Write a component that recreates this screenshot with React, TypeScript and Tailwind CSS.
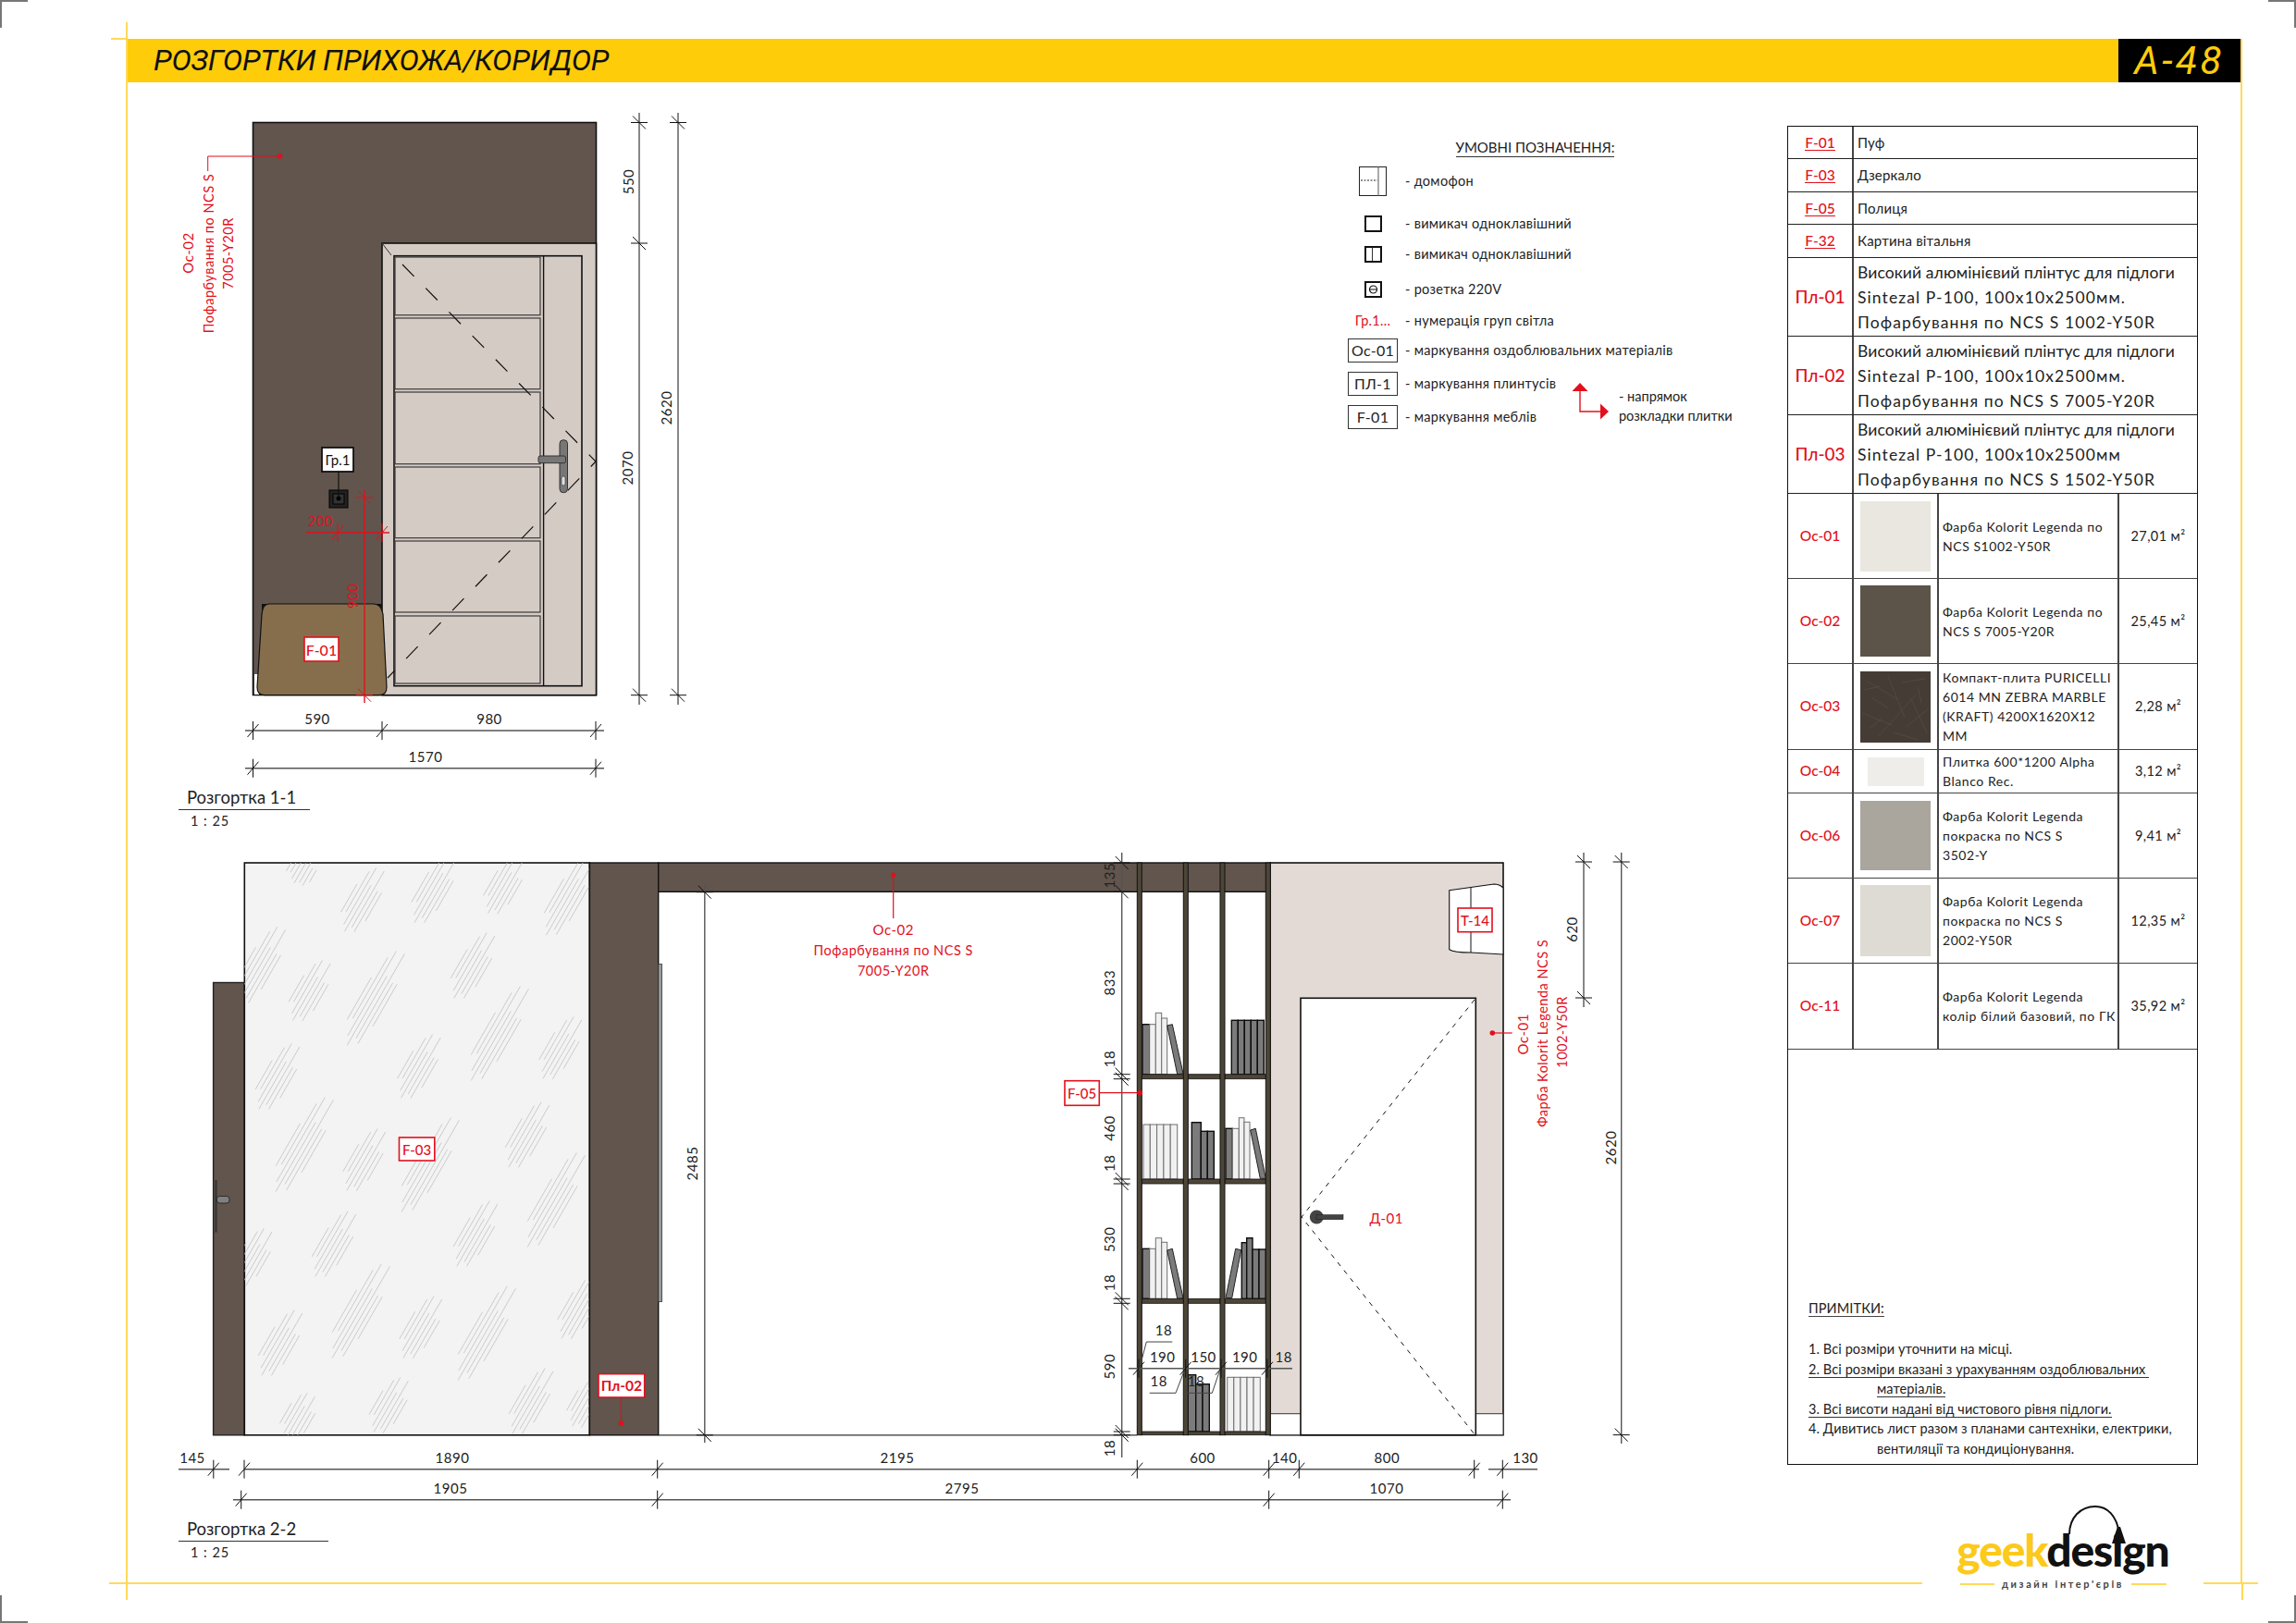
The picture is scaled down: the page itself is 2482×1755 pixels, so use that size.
import React from "react";

const RED = "#e2101c";
const WALL = "#61554d";
const DOOR = "#d5cbc5";
const PALE = "#e3dad5";

// dimension line running left to right with slashed ticks
function HDim({ y, x1, x2, ticks }: { y: number; x1: number; x2: number; ticks: number[] }) {
  return (
    <g>
      <line x1={x1} y1={y} x2={x2} y2={y} stroke="#555" strokeWidth={1.4} />
      {ticks.map((t) => (
        <g key={t} stroke="#111" strokeWidth={1}>
          <line x1={t} y1={y - 10} x2={t} y2={y + 10} />
          <line x1={t - 6} y1={y + 7} x2={t + 6} y2={y - 7} />
        </g>
      ))}
    </g>
  );
}

function VDim({ x, y1, y2, ticks, color = "#111" }: { x: number; y1: number; y2: number; ticks: number[]; color?: string }) {
  return (
    <g>
      <line x1={x} y1={y1} x2={x} y2={y2} stroke="#555" strokeWidth={1.4} />
      {ticks.map((t) => (
        <g key={t} stroke={color} strokeWidth={1}>
          <line x1={x - 9} y1={t} x2={x + 9} y2={t} />
          <line x1={x - 7} y1={t - 7} x2={x + 7} y2={t + 7} />
        </g>
      ))}
    </g>
  );
}

function Label({ x, y, children, size = 15, fill = "#222" }: { x: number; y: number; children: React.ReactNode; size?: number; fill?: string }) {
  return (
    <text x={x} y={y} fontSize={size} fill={fill} textAnchor="middle" dominantBaseline="central" letterSpacing={0.5}>
      {children}
    </text>
  );
}

function RotLabel({ x, y, children, size = 15, fill = "#222" }: { x: number; y: number; children: React.ReactNode; size?: number; fill?: string }) {
  return (
    <text x={x} y={y} fontSize={size} fill={fill} textAnchor="middle" dominantBaseline="central" letterSpacing={0.5} transform={`rotate(-90 ${x} ${y})`}>
      {children}
    </text>
  );
}

function Tag({ x, y, w, h, text, color = RED, weight = 700, size = 15 }: { x: number; y: number; w: number; h: number; text: string; color?: string; weight?: number; size?: number }) {
  return (
    <g>
      <rect x={x} y={y} width={w} height={h} fill="#fff" stroke={color} strokeWidth={1.6} />
      <text x={x + w / 2} y={y + h / 2} fontSize={size} fontWeight={weight} fill={color} textAnchor="middle" dominantBaseline="central">
        {text}
      </text>
    </g>
  );
}

function Elevation11() {
  const panels = [
    [278, 340.7],
    [344, 420.7],
    [424, 501.7],
    [505, 581.7],
    [585, 662],
    [666, 739],
  ];
  return (
    <svg className="block shrink-0" width={570} height={790} viewBox="190 110 570 790">
      <rect x={273.5} y={132.5} width={371} height={619} fill={WALL} stroke="#111" strokeWidth={1.6} />
      <rect x={275} y={729} width={5} height={22} fill="#fff" />

      {/* door */}
      <rect x={413} y={263} width={231.5} height={488.7} fill={DOOR} stroke="#111" strokeWidth={1.6} />
      <line x1={413} y1={263} x2={423} y2={276} stroke="#333" strokeWidth={1} />
      <rect x={426} y={276.7} width={203} height={465} fill={DOOR} stroke="#111" strokeWidth={1.6} />
      {panels.map(([a, b]) => (
        <rect key={a} x={427} y={a} width={157} height={b - a} fill={DOOR} stroke="#3a3a3a" strokeWidth={1.2} />
      ))}
      <line x1={587.6} y1={277} x2={587.6} y2={741} stroke="#111" strokeWidth={1.4} />
      <polyline points="435,286 644,499 419,733" fill="none" stroke="#111" strokeWidth={1.2} strokeDasharray="18 18" />
      <rect x={605} y={475.7} width={8.5} height={57} rx={4} fill="#777" stroke="#333" strokeWidth={1} />
      <rect x={582} y={493} width={29.5} height={7.7} rx={2} fill="#777" stroke="#333" strokeWidth={1} />
      <rect x={607} y={515} width={4} height={10} rx={2} fill="#ddd" stroke="#333" strokeWidth={0.6} />

      {/* pouf */}
      <path d="M283 653 L413 653 L413 660 L283 660 Z" fill="#111" />
      <path d="M291 653 H404 Q412 653 414 664 L418 743 Q418 751.7 410 751.7 H286 Q278 751.7 278 743 L283 664 Q284 653 291 653 Z" fill="#866e4c" stroke="#111" strokeWidth={1.2} />
      <Tag x={329} y={689} w={37} h={26} text="F-01" size={16} weight={500} />

      {/* socket */}
      <rect x={348} y={484} width={34} height={26} fill="#fff" stroke="#111" strokeWidth={1.8} />
      <text x={365} y={497} fontSize={15} fill="#111" textAnchor="middle" dominantBaseline="central">Гр.1</text>
      <rect x={356} y={530} width={20} height={19} fill="#222" stroke="#000" strokeWidth={1} />
      <rect x={360} y={534} width={12} height={11} fill="#333" stroke="#000" strokeWidth={1} />
      <line x1={366} y1={510} x2={366} y2={539} stroke="#111" strokeWidth={1.2} />
      <circle cx={366} cy={539} r={2.5} fill="#000" />

      {/* red dimensions */}
      <line x1={331} y1={576} x2={421} y2={576} stroke={RED} strokeWidth={1.6} />
      <line x1={394} y1={530} x2={394} y2={760} stroke={RED} strokeWidth={1.4} />
      {[365, 413].map((t) => (
        <g key={t} stroke={RED} strokeWidth={1}>
          <line x1={t} y1={566} x2={t} y2={586} />
          <line x1={t - 6} y1={583} x2={t + 6} y2={569} />
        </g>
      ))}
      {[538, 751.7].map((t) => (
        <g key={t} stroke={RED} strokeWidth={1}>
          <line x1={385} y1={t} x2={403} y2={t} />
          <line x1={387} y1={t - 7} x2={401} y2={t + 7} />
        </g>
      ))}
      <Label x={346.5} y={563} fill={RED}>200</Label>
      <RotLabel x={381} y={644.5} fill={RED}>900</RotLabel>

      {/* Oc-02 callout */}
      <polyline points="302.6,169 224.7,169 224.7,185" fill="none" stroke={RED} strokeWidth={1} />
      <circle cx={302.6} cy={169} r={2.8} fill={RED} />
      <RotLabel x={203} y={273.5} fill={RED}>Ос-02</RotLabel>
      <RotLabel x={225.5} y={274} fill={RED} size={14.5}>Пофарбування по NCS S</RotLabel>
      <RotLabel x={246.5} y={274} fill={RED} size={14.5}>7005-Y20R</RotLabel>

      <VDim x={691} y1={122} y2={762} ticks={[132.5, 263, 751.7]} />
      <VDim x={733} y1={122} y2={762} ticks={[132.5, 751.7]} />
      <RotLabel x={678.5} y={196.5}>550</RotLabel>
      <RotLabel x={678} y={506}>2070</RotLabel>
      <RotLabel x={720} y={441}>2620</RotLabel>

      <HDim y={790} x1={265} x2={653} ticks={[273.5, 413, 644]} />
      <HDim y={830.7} x1={265} x2={653} ticks={[273.5, 644]} />
      <Label x={343} y={776.5}>590</Label>
      <Label x={529} y={776.5}>980</Label>
      <Label x={460} y={817.5}>1570</Label>
    </svg>
  );
}

// a patch of diagonal reflection strokes on the mirror
function Streaks({ cx, cy, len }: { cx: number; cy: number; len: number }) {
  const factors = [0.5, 0.72, 1, 0.82, 1, 0.72, 0.5];
  const shifts = [-0.05, 0.1, 0.06, -0.12, 0.08, -0.1, 0.02];
  return (
    <g>
      {factors.map((f, i) => {
        const off = (i - 3) * 4.6;
        const l = (len * f) / 2;
        const mx = cx + off * 0.87 + shifts[i] * len * 0.5;
        const my = cy + off * 0.5 - shifts[i] * len * 0.87;
        return <line key={i} x1={mx - l * 0.5} y1={my + l * 0.87} x2={mx + l * 0.5} y2={my - l * 0.87} stroke="#c6c6c6" strokeWidth={0.9} />;
      })}
    </g>
  );
}

const streaks = [
  [391, 974, 70], [468, 962, 75], [544, 958, 62], [613, 971, 85], [326, 940, 30], [280, 1045, 85],
  [334, 1072, 66], [403, 1081, 105], [510, 1045, 72], [537, 1119, 105], [605, 1134, 68], [299, 1165, 72],
  [452, 1154, 70], [326, 1239, 105], [393, 1255, 68], [462, 1261, 105], [569, 1228, 72], [598, 1299, 105],
  [360, 1346, 72], [513, 1335, 72], [272, 1360, 62], [387, 1419, 105], [302, 1453, 72], [454, 1436, 68],
  [523, 1443, 105], [625, 1415, 68], [573, 1516, 72], [420, 1520, 60], [322, 1532, 50], [632, 1518, 50],
];

type Bk = { x: number; w: number; top: number; dark?: boolean };

const books: { bottom: number; list: Bk[] }[] = [
  {
    bottom: 1160.7,
    list: [
      { x: 1235, w: 7.7, top: 1106.7, dark: true }, { x: 1242.7, w: 6.6, top: 1106.7 }, { x: 1249.3, w: 6.4, top: 1094.3 }, { x: 1255.7, w: 6, top: 1100 },
      { x: 1331.3, w: 7, top: 1102.3, dark: true }, { x: 1338.3, w: 7, top: 1102.3, dark: true }, { x: 1345.3, w: 7, top: 1102.3, dark: true }, { x: 1352.3, w: 7, top: 1102.3, dark: true }, { x: 1359.3, w: 7, top: 1102.3, dark: true },
    ],
  },
  {
    bottom: 1274,
    list: [
      { x: 1236, w: 7.3, top: 1215 }, { x: 1243.3, w: 7.3, top: 1215 }, { x: 1250.6, w: 7.3, top: 1215 }, { x: 1257.9, w: 7.3, top: 1215 }, { x: 1265.2, w: 7.5, top: 1215 },
      { x: 1288.3, w: 10, top: 1212.7, dark: true }, { x: 1298.3, w: 7, top: 1222.3, dark: true }, { x: 1305.3, w: 7, top: 1222.3, dark: true },
      { x: 1325, w: 7.3, top: 1219.3, dark: true }, { x: 1332.3, w: 7, top: 1219.3 }, { x: 1339.3, w: 5.7, top: 1207.7 }, { x: 1345, w: 6, top: 1212.3 },
    ],
  },
  {
    bottom: 1403.3,
    list: [
      { x: 1235, w: 7.7, top: 1349.3, dark: true }, { x: 1242.7, w: 6.6, top: 1349.3 }, { x: 1249.3, w: 6.4, top: 1337.7 }, { x: 1255.7, w: 6, top: 1342.3 },
      { x: 1342.3, w: 5.4, top: 1342.7, dark: true }, { x: 1347.7, w: 6.3, top: 1337.7, dark: true }, { x: 1354, w: 7, top: 1350, dark: true }, { x: 1361, w: 7.3, top: 1350, dark: true },
    ],
  },
  {
    bottom: 1547,
    list: [
      { x: 1284.3, w: 8.4, top: 1485.7, dark: true }, { x: 1292.7, w: 7.3, top: 1495.7, dark: true }, { x: 1300, w: 7.3, top: 1495.7, dark: true },
      { x: 1326.7, w: 7.1, top: 1488.3 }, { x: 1333.8, w: 7.1, top: 1488.3 }, { x: 1340.9, w: 7.1, top: 1488.3 }, { x: 1348, w: 7.1, top: 1488.3 }, { x: 1355.1, w: 7.2, top: 1488.3 },
    ],
  },
];

function Leader({ points }: { points: string }) {
  return <polyline points={points} fill="none" stroke="#444" strokeWidth={1} />;
}

function Elevation22() {
  const uprights = [1229.3, 1279.3, 1319, 1368.3];
  return (
    <svg className="block shrink-0" width={1580} height={790} viewBox="190 900 1580 790">
      <defs>
        <clipPath id="mirror-clip">
          <rect x={264.3} y={932} width={373} height={618.8} />
        </clipPath>
      </defs>

      {/* left wall + mirror + pillar */}
      <rect x={230.6} y={1061.5} width={33.7} height={489.3} fill={WALL} stroke="#222" strokeWidth={1.4} />
      <rect x={232.5} y={1275} width={2} height={56.6} fill="#333" />
      <rect x={234.4} y={1292.5} width={13.6} height={7.5} rx={3} fill="#808080" stroke="#222" strokeWidth={0.9} />
      <rect x={264.3} y={932} width={373} height={618.8} fill="#f3f3f3" stroke="#111" strokeWidth={1.6} />
      <g clipPath="url(#mirror-clip)">
        {streaks.map(([cx, cy, len]) => (
          <Streaks key={`${cx}-${cy}`} cx={cx} cy={cy} len={len} />
        ))}
      </g>
      <rect x={637.4} y={932} width={74.3} height={618.8} fill={WALL} stroke="#111" strokeWidth={1.4} />
      <rect x={711.7} y={1041.4} width={3.8} height={365.2} fill="#999" stroke="#333" strokeWidth={0.8} />

      {/* beam and right wall */}
      <rect x={711.7} y={932} width={661.3} height={31.3} fill={WALL} stroke="#111" strokeWidth={1.4} />
      <rect x={1373} y={932} width={252} height={618.7} fill={PALE} stroke="#111" strokeWidth={1.6} />
      <rect x={1373} y={1527.7} width={252} height={23} fill="#fff" stroke="#333" strokeWidth={1} />
      <line x1={711.7} y1={1550.8} x2={1229} y2={1550.8} stroke="#333" strokeWidth={1.2} />

      {/* door */}
      <rect x={1406} y={1078.3} width={189.3} height={472.4} fill="#fff" stroke="#111" strokeWidth={1.6} />
      <polyline points="1594,1080 1407,1315 1594,1550" fill="none" stroke="#111" strokeWidth={1} strokeDasharray="5 6" />
      <circle cx={1423.3} cy={1315} r={7.5} fill="#444" />
      <rect x={1423} y={1312.7} width={29} height={5} fill="#444" stroke="#222" strokeWidth={0.6} />

      {/* wall unit */}
      <path d="M1566.7 961.7 L1615 955 Q1621 955 1625 959 L1625 1031 L1590 1029 Q1572 1029 1566.7 1025.7 Z" fill="#fff" stroke="#111" strokeWidth={1.1} />
      <line x1={1590} y1={959} x2={1590} y2={1029} stroke="#111" strokeWidth={1} />
      <Tag x={1576} y={981} w={37} h={25.7} text="Т-14" size={15} weight={500} />

      {/* books */}
      {books.map((group) =>
        group.list.map((b) => (
          <rect
            key={`${group.bottom}-${b.x}`}
            x={b.x}
            y={b.top}
            width={b.w}
            height={group.bottom - b.top}
            fill={b.dark ? "#7b7b7b" : "#f1f1f1"}
            stroke={b.dark ? "#0d0d0d" : "#6f6f6f"}
            strokeWidth={b.dark ? 1.4 : 1}
          />
        )),
      )}
      <polygon points="1261.7,1108 1267.3,1106.7 1279,1160 1272.7,1160.7" fill="#7b7b7b" stroke="#222" strokeWidth={1} />
      <polygon points="1351.7,1221 1357.3,1219.3 1368.3,1273.3 1362.3,1273.3" fill="#7b7b7b" stroke="#222" strokeWidth={1} />
      <polygon points="1261.7,1351 1267.3,1349.3 1279,1402.7 1272.7,1403.3" fill="#7b7b7b" stroke="#222" strokeWidth={1} />
      <polygon points="1325,1402.3 1335.7,1349.3 1341.7,1350.7 1331.7,1402.7" fill="#7b7b7b" stroke="#222" strokeWidth={1} />

      {/* shelf frame */}
      {[1160.7, 1274, 1403.3, 1547].map((y) =>
        [1234.3, 1284, 1324].map((x, i) => (
          <rect key={`${y}-${x}`} x={x} y={y} width={[45, 35, 44.3][i]} height={y === 1547 ? 3.7 : 5} fill="#4d4638" stroke="#111" strokeWidth={0.8} />
        )),
      )}
      {uprights.map((x) => (
        <rect key={x} x={x} y={932} width={5} height={618.7} fill="#4d4638" stroke="#111" strokeWidth={1} />
      ))}

      {/* callouts */}
      <line x1={965.7} y1={945} x2={965.7} y2={992} stroke={RED} strokeWidth={1.2} />
      <circle cx={965.7} cy={945} r={2.6} fill={RED} />
      <Label x={965.7} y={1003.6} fill={RED}>Ос-02</Label>
      <Label x={965.7} y={1026} fill={RED} size={14.5}>Пофарбування по NCS S</Label>
      <Label x={965.7} y={1048} fill={RED} size={14.5}>7005-Y20R</Label>

      <Tag x={431.5} y={1229} w={38.3} h={25} text="F-03" size={15} weight={500} />
      <Tag x={647} y={1484.7} w={49.7} h={25.3} text="Пл-02" size={15.5} />
      <line x1={671.5} y1={1510} x2={671.5} y2={1538} stroke={RED} strokeWidth={1.2} />
      <circle cx={671.5} cy={1538} r={2.8} fill={RED} />

      <Tag x={1151} y={1167.7} w={37.3} h={26.6} text="F-05" size={15} weight={500} />
      <line x1={1188} y1={1180.7} x2={1232.3} y2={1180.7} stroke={RED} strokeWidth={1.2} />
      <circle cx={1232.3} cy={1180.7} r={2.8} fill={RED} />

      <Label x={1498.7} y={1315.7} fill={RED}>Д-01</Label>

      <line x1={1613.3} y1={1116} x2={1634.7} y2={1116} stroke={RED} strokeWidth={1.2} />
      <circle cx={1613.3} cy={1116} r={2.8} fill={RED} />
      <RotLabel x={1645.7} y={1117.3} fill={RED}>Ос-01</RotLabel>
      <RotLabel x={1667.7} y={1116.3} fill={RED} size={14.5}>Фарба Kolorit Legenda NCS S</RotLabel>
      <RotLabel x={1688.7} y={1115} fill={RED} size={14.5}>1002-Y50R</RotLabel>

      {/* shelf dimensions */}
      <VDim x={1212.7} y1={921} y2={1575} ticks={[932, 963.3, 1160.7, 1165.7, 1274, 1279, 1403.3, 1408.3, 1547, 1550.7]} />
      <RotLabel x={1199.3} y={945.6}>135</RotLabel>
      <RotLabel x={1199.3} y={1061.7}>833</RotLabel>
      <RotLabel x={1199.3} y={1144}>18</RotLabel>
      <RotLabel x={1199.3} y={1219}>460</RotLabel>
      <RotLabel x={1199.3} y={1256.7}>18</RotLabel>
      <RotLabel x={1199.3} y={1339.3}>530</RotLabel>
      <RotLabel x={1199.3} y={1386}>18</RotLabel>
      <RotLabel x={1199.3} y={1476.7}>590</RotLabel>
      <RotLabel x={1199.3} y={1565}>18</RotLabel>

      <HDim y={1478.7} x1={1220} x2={1397} ticks={[1231, 1281.7, 1320, 1370]} />
      <Label x={1256.7} y={1465.7}>190</Label>
      <Label x={1301} y={1465.7}>150</Label>
      <Label x={1345.7} y={1465.7}>190</Label>
      <Label x={1387.7} y={1465.7}>18</Label>
      <Label x={1258} y={1436.7}>18</Label>
      <Label x={1252.7} y={1491.7}>18</Label>
      <Label x={1293} y={1491.7}>18</Label>
      <Leader points="1231,1481.7 1239.3,1450 1267.3,1450" />
      <Leader points="1280,1481.7 1271,1505.3 1242.7,1505.3" />
      <Leader points="1318.3,1481.7 1310.3,1505.3 1283.3,1505.3" />

      {/* general dimensions */}
      <VDim x={761.8} y1={955.7} y2={1559} ticks={[963.7, 1550.8]} />
      <RotLabel x={748.4} y={1257}>2485</RotLabel>
      <VDim x={1712} y1={921} y2={1088} ticks={[931, 1078]} />
      <RotLabel x={1699} y={1004}>620</RotLabel>
      <VDim x={1752.7} y1={921} y2={1560} ticks={[931, 1550.6]} />
      <RotLabel x={1740.7} y={1240}>2620</RotLabel>

      <HDim y={1587.7} x1={193} x2={248} ticks={[230.8]} />
      <HDim y={1587.7} x1={264} x2={1599} ticks={[264, 710.7, 1229.3, 1371.7, 1404.3, 1593.7]} />
      <HDim y={1587.7} x1={1609} x2={1662} ticks={[1624.3]} />
      <HDim y={1620.7} x1={252} x2={1633} ticks={[260.7, 710.7, 1371.7, 1624.3]} />
      <Label x={208} y={1574.7}>145</Label>
      <Label x={489} y={1574.7}>1890</Label>
      <Label x={970} y={1574.7}>2195</Label>
      <Label x={1300} y={1574.7}>600</Label>
      <Label x={1388.7} y={1574.7}>140</Label>
      <Label x={1499.3} y={1574.7}>800</Label>
      <Label x={1649} y={1574.7}>130</Label>
      <Label x={487} y={1607.7}>1905</Label>
      <Label x={1040} y={1607.7}>2795</Label>
      <Label x={1499} y={1607.7}>1070</Label>
    </svg>
  );
}

function ViewTitle({ name, width, className }: { name: string; width: string; className: string }) {
  return (
    <div className={`absolute left-[193px] text-[#222] ${className}`}>
      <div className={`h-[26px] border-b border-[#333] pl-[9px] text-[18.5px] leading-[24px] tracking-[0px] ${width}`}>{name}</div>
      <div className="pl-[13px] text-[14.5px] leading-[24px] tracking-[1px]">1 : 25</div>
    </div>
  );
}

function LegendRow({ className, icon, text }: { className: string; icon: React.ReactNode; text: string }) {
  return (
    <div className={`flex items-center ${className}`}>
      <div className="flex w-[54px] justify-center">{icon}</div>
      <span className="ml-[8px] whitespace-nowrap">{text}</span>
    </div>
  );
}

function BoxTag({ text }: { text: string }) {
  return <div className="flex h-[26px] w-[54px] items-center justify-center border border-[#333] text-[16px]">{text}</div>;
}

function Legend() {
  return (
    <div className="ml-[697px] mt-[39px] w-[420px] shrink-0 text-[14.5px] tracking-[0.3px] text-[#222]">
      <div className="w-[405px] text-center">
        <span className="border-b border-[#333] pb-[1px] text-[15px] leading-[18px] tracking-[0px]">УМОВНІ ПОЗНАЧЕННЯ:</span>
      </div>
      <LegendRow
        className="mt-[5px] h-[40px]"
        text="- домофон"
        icon={
          <svg width={30} height={32} viewBox="0 0 30 32">
            <rect x={0.5} y={0.5} width={29} height={31} fill="none" stroke="#222" />
            <line x1={21} y1={0} x2={21} y2={32} stroke="#555" />
            <line x1={2} y1={15} x2={20} y2={15} stroke="#222" strokeDasharray="2 1.5" />
          </svg>
        }
      />
      <LegendRow className="mt-[9px] h-[34px]" text="- вимикач одноклавішний" icon={<div className="h-[18px] w-[19px] border-2 border-[#111]" />} />
      <LegendRow
        className="h-[32px]"
        text="- вимикач одноклавішний"
        icon={
          <div className="flex h-[18px] w-[19px] border-2 border-[#111]">
            <div className="w-[7px] border-r border-[#333]" />
          </div>
        }
      />
      <LegendRow
        className="h-[44px]"
        text="- розетка 220V"
        icon={
          <svg width={19} height={18} viewBox="0 0 19 18">
            <rect x={1} y={1} width={17} height={16} fill="none" stroke="#111" strokeWidth={2} />
            <circle cx={9.5} cy={9} r={4} fill="none" stroke="#111" strokeWidth={1.2} />
            <line x1={6} y1={9} x2={13} y2={9} stroke="#111" />
          </svg>
        }
      />
      <LegendRow className="h-[24px]" text="- нумерація груп світла" icon={<span className="text-[14.5px] text-[#e2101c]">Гр.1...</span>} />
      <LegendRow className="h-[40px]" text="- маркування оздоблювальних матеріалів" icon={<BoxTag text="Ос-01" />} />
      <div className="flex">
        <div className="w-[241px]">
          <LegendRow className="h-[32px]" text="- маркування плинтусів" icon={<BoxTag text="ПЛ-1" />} />
          <LegendRow className="h-[40px]" text="- маркування меблів" icon={<BoxTag text="F-01" />} />
        </div>
        <svg className="mt-[15px] shrink-0" width={41} height={42} viewBox="0 0 41 42">
          <polyline points="10,8 10,31 32,31" fill="none" stroke="#e2101c" strokeWidth={1.4} />
          <polygon points="1.5,9 18.5,9 10,0" fill="#e2101c" />
          <polygon points="32,22.5 32,39.5 41,31" fill="#e2101c" />
        </svg>
        <div className="ml-[11px] mt-[19px] whitespace-nowrap leading-[21px] tracking-[0px]">
          <div>- напрямок</div>
          <div>розкладки плитки</div>
        </div>
      </div>
    </div>
  );
}

const furniture = [
  { code: "F-01", name: "Пуф", h: "h-[35px]" },
  { code: "F-03", name: "Дзеркало", h: "h-[36px]" },
  { code: "F-05", name: "Полиця", h: "h-[35px]" },
  { code: "F-32", name: "Картина вітальня", h: "h-[36px]" },
];

const plinths = [
  { code: "Пл-01", size: "100x10x2500мм.", ncs: "Пофарбування по NCS S 1002-Y50R" },
  { code: "Пл-02", size: "100x10x2500мм.", ncs: "Пофарбування по NCS S 7005-Y20R" },
  { code: "Пл-03", size: "100x10x2500мм", ncs: "Пофарбування по NCS S 1502-Y50R" },
];

const materials = [
  { code: "Ос-01", h: "h-[92px]", swatch: "h-[76px] w-[76px] bg-[#eae7e1]", text: ["Фарба Kolorit Legenda по", "NCS S1002-Y50R"], area: "27,01" },
  { code: "Ос-02", h: "h-[92px]", swatch: "h-[77px] w-[76px] bg-[#5c5349]", text: ["Фарба Kolorit Legenda по", "NCS S 7005-Y20R"], area: "25,45" },
  { code: "Ос-03", h: "h-[93px]", swatch: "h-[77px] w-[76px] bg-[#453c36]", marble: true, text: ["Компакт-плита PURICELLI", "6014 MN ZEBRA MARBLE", "(KRAFT) 4200X1620X12", "MM"], area: "2,28" },
  { code: "Ос-04", h: "h-[47px]", swatch: "h-[31px] w-[61px] bg-[#efede9]", text: ["Плитка 600*1200 Alpha", "Blanco Rec."], area: "3,12" },
  { code: "Ос-06", h: "h-[92px]", swatch: "h-[75px] w-[76px] bg-[#aaa69e]", text: ["Фарба Kolorit Legenda", "покраска по NCS S", "3502-Y"], area: "9,41" },
  { code: "Ос-07", h: "h-[92px]", swatch: "h-[77px] w-[76px] bg-[#dedad4]", text: ["Фарба Kolorit Legenda", "покраска по NCS S", "2002-Y50R"], area: "12,35" },
  { code: "Ос-11", h: "h-[93px]", swatch: "", text: ["Фарба Kolorit Legenda", "колір білий базовий, по ГК"], area: "35,92" },
];

function MarbleLines() {
  const lines = [
    [6, 10, 40, 30], [20, 70, 60, 25], [30, 5, 48, 50], [50, 60, 74, 40], [2, 45, 34, 58], [45, 12, 70, 8], [12, 28, 30, 40], [55, 30, 72, 66],
    [4, 20, 22, 16], [36, 66, 62, 74], [62, 16, 66, 34], [10, 62, 24, 50],
  ];
  return (
    <svg className="block" width={76} height={77} viewBox="0 0 76 77">
      {lines.map(([a, b, c, d]) => (
        <line key={`${a}-${b}`} x1={a} y1={b} x2={c} y2={d} stroke="#5f554d" strokeWidth={0.5} />
      ))}
    </svg>
  );
}

function SpecTable() {
  return (
    <div className="mt-[47px] flex h-[1448px] w-[444px] shrink-0 flex-col border border-[#111] text-[#222]">
      {furniture.map((f) => (
        <div key={f.code} className={`grid grid-cols-[71px_1fr] items-stretch border-b border-[#222] ${f.h}`}>
          <div className="flex items-center justify-center border-r-2 border-[#444]">
            <span className="border-b border-[#e2101c] text-[15.5px] font-medium leading-[16px] text-[#e2101c]">{f.code}</span>
          </div>
          <div className="flex items-center pl-[4px] text-[15px] tracking-[0.2px]">{f.name}</div>
        </div>
      ))}
      {plinths.map((p) => (
        <div key={p.code} className="grid h-[85px] grid-cols-[71px_1fr] border-b border-[#222]">
          <div className="flex items-center justify-center border-r-2 border-[#444] text-[19px] font-medium text-[#e2101c]">{p.code}</div>
          <div className="flex flex-col justify-center whitespace-nowrap pl-[4px] text-[17.5px] leading-[27px] tracking-[0.1px]">
            <div>Високий алюмінієвий плінтус для підлоги</div>
            <div className="tracking-[1.1px]">Sintezal P-100, {p.size}</div>
            <div className="tracking-[1.1px]">{p.ncs}</div>
          </div>
        </div>
      ))}
      {materials.map((m) => (
        <div key={m.code} className={`grid grid-cols-[71px_92px_195px_1fr] border-b border-[#444] ${m.h}`}>
          <div className="flex items-center justify-center border-r-2 border-[#444] text-[15.5px] font-medium text-[#e2101c]">{m.code}</div>
          <div className="flex items-center justify-center border-r-2 border-[#444]">
            {m.swatch && <div className={m.swatch}>{m.marble && <MarbleLines />}</div>}
          </div>
          <div className="flex flex-col justify-center whitespace-nowrap border-r-2 border-[#444] pl-[4px] text-[14px] leading-[21px] tracking-[0.55px]">
            {m.text.map((line) => (
              <div key={line}>{line}</div>
            ))}
          </div>
          <div className="flex items-center justify-center whitespace-nowrap text-[14.5px] tracking-[0.4px]">
            {m.area} м²
          </div>
        </div>
      ))}
      <div className="mt-auto pb-[6px] pl-[22px] text-[14.5px] leading-[21.5px] tracking-[0.1px]">
        <div className="mb-[23px]">
          <span className="border-b border-[#444]">ПРИМІТКИ:</span>
        </div>
        <div>1. Всі розміри уточнити на місці.</div>
        <div>
          <span className="whitespace-pre border-b border-[#333]">2. Всі розміри вказані з урахуванням оздоблювальних </span>
        </div>
        <div className="pl-[74px]">
          <span className="border-b border-[#333]">матеріалів.</span>
        </div>
        <div>
          <span className="border-b border-[#333]">3. Всі висоти надані від чистового рівня підлоги.</span>
        </div>
        <div>4. Дивитись лист разом з планами сантехніки, електрики,</div>
        <div className="pl-[74px]">вентиляції та кондиціонування.</div>
      </div>
    </div>
  );
}

function Logo() {
  return (
    <div className="absolute left-[2078px] top-[1625px] flex h-[100px] w-[304px] flex-col items-center bg-white">
      <svg className="absolute left-[150px] top-0" width={80} height={46} viewBox="0 0 80 46">
        <path d="M9 34 C9 16 21 4 37 4 C51 4 59 15 62 28" fill="none" stroke="#111" strokeWidth={2} />
        <path d="M61 26 L64 26 L70 44 L55 44 Z" fill="#111" />
      </svg>
      <div className="mt-[20px] whitespace-nowrap text-[48px] font-black leading-[62px] tracking-[-1.2px]">
        <span className="text-[#fdc91a]">geek</span>
        <span className="text-[#111]">design</span>
      </div>
      <div className="mt-[-1px] flex w-[223px] items-center gap-[8px]">
        <div className="h-[2px] flex-1 bg-[#ffd95a]" />
        <span className="whitespace-nowrap text-[11px] font-bold leading-[14px] tracking-[2.6px] text-[#444]">дизайн інтер'єрів</span>
        <div className="h-[2px] flex-1 bg-[#ffd95a]" />
      </div>
    </div>
  );
}

export default function App() {
  return (
    <div className="relative h-[1755px] w-[2482px] overflow-hidden bg-white pl-[136px] pr-[58px] pt-[42px] font-[Lato,sans-serif]">
      {/* trim marks */}
      <div className="absolute left-0 top-0 h-[30px] w-[30px] border-l-2 border-t-2 border-[#777]" />
      <div className="absolute right-0 top-0 h-[30px] w-[30px] border-r-2 border-t-2 border-[#777]" />
      <div className="absolute bottom-0 left-0 h-[30px] w-[30px] border-b-2 border-l-2 border-[#777]" />
      <div className="absolute bottom-0 right-0 h-[30px] w-[30px] border-b-2 border-r-2 border-[#777]" />
      <div className="absolute left-[136px] top-[24px] h-[18px] w-[2px] bg-[#ffd95a]" />
      <div className="absolute left-[120px] top-[41px] h-[2px] w-[16px] bg-[#ffd95a]" />
      <div className="absolute left-[2423px] top-[1712px] h-[18px] w-[2px] bg-[#ffd95a]" />
      <div className="absolute left-[2424px] top-[1711px] h-[2px] w-[17px] bg-[#ffd95a]" />
      <div className="absolute left-[136px] top-[1712px] h-[18px] w-[2px] bg-[#ffd95a]" />
      <div className="absolute left-[118px] top-[1711px] h-[2px] w-[18px] bg-[#ffd95a]" />

      <div className="flex h-[1671px] flex-col border-b-2 border-l-2 border-r-2 border-[#ffd95a]">
        <header className="flex h-[47px] shrink-0 items-stretch justify-between bg-[#ffcc0a]">
          <h1 className="whitespace-nowrap pl-[28px] text-[32px] font-normal italic leading-[46px] tracking-[-0.2px] text-[#111] [font-family:Roboto,sans-serif]">
            РОЗГОРТКИ ПРИХОЖА/КОРИДОР
          </h1>
          <div className="flex w-[132px] items-center justify-center bg-black text-[42px] italic leading-none tracking-[3.5px] text-[#ffcc0a] [font-family:Roboto,sans-serif]">
            А-48
          </div>
        </header>
        <div className="flex flex-1">
          <div className="w-[1794px] shrink-0">
            <div className="flex pl-[52px] pt-[21px]">
              <Elevation11 />
              <Legend />
            </div>
            <div className="mt-[1px] pl-[52px]">
              <Elevation22 />
            </div>
          </div>
          <SpecTable />
        </div>
      </div>

      <ViewTitle name="Розгортка 1-1" width="w-[142px]" className="top-[850px]" />
      <ViewTitle name="Розгортка 2-2" width="w-[162px]" className="top-[1641px]" />
      <Logo />
    </div>
  );
}
